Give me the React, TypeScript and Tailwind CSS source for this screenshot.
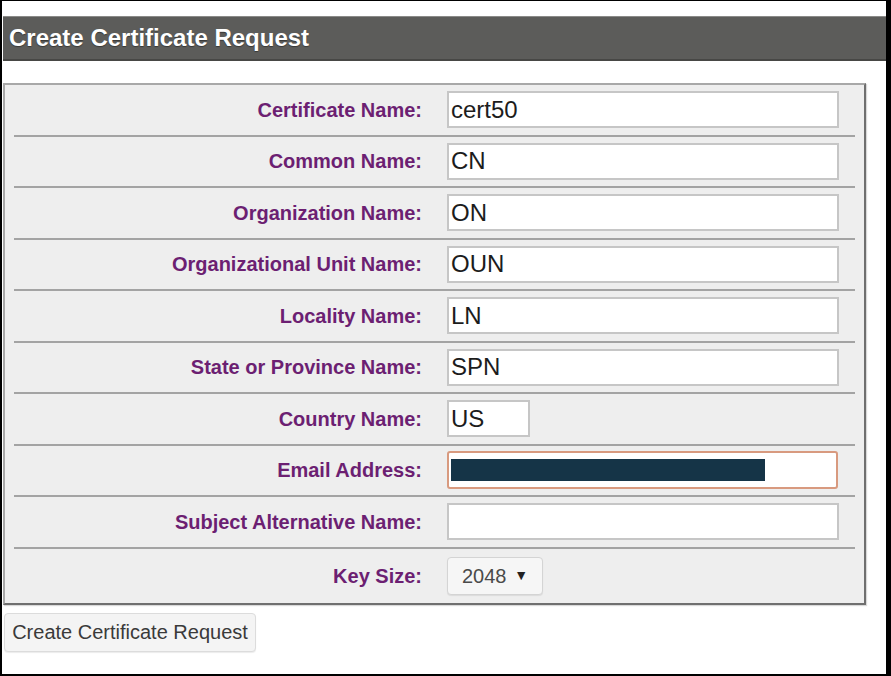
const ROWS: { label: string; value?: string; kind: "text" | "short" | "email" | "select" }[] = [
  { label: "Certificate Name:", value: "cert50", kind: "text" },
  { label: "Common Name:", value: "CN", kind: "text" },
  { label: "Organization Name:", value: "ON", kind: "text" },
  { label: "Organizational Unit Name:", value: "OUN", kind: "text" },
  { label: "Locality Name:", value: "LN", kind: "text" },
  { label: "State or Province Name:", value: "SPN", kind: "text" },
  { label: "Country Name:", value: "US", kind: "short" },
  { label: "Email Address:", kind: "email" },
  { label: "Subject Alternative Name:", value: "", kind: "text" },
  { label: "Key Size:", value: "2048", kind: "select" },
]

function Field({ row }: { row: (typeof ROWS)[number] }) {
  if (row.kind === "select") {
    return (
      <div className="flex h-[38px] w-[96px] items-center justify-between rounded-[4px] border border-[#d4d4d4] bg-[#f6f6f6] pl-[14px] pr-[14px] text-[20px] text-[#4a4a4a] shadow-[0_1px_1px_rgba(0,0,0,0.08)]">
        <span>{row.value}</span>
        <span className="text-[14px] text-[#222]">▼</span>
      </div>
    )
  }
  if (row.kind === "email") {
    return (
      <div className="flex h-[38px] w-[391px] items-center rounded-[3px] border-2 border-[#d89a7f] bg-white pl-[2px]">
        <div className="h-[22px] w-[314px] bg-[#153447]" />
      </div>
    )
  }
  return (
    <div
      className={
        "flex h-[37px] items-center border-2 border-[#c6c6c6] bg-white pl-[2px] text-[24px] text-[#1c1c1c] " +
        (row.kind === "short" ? "w-[83px]" : "w-[392px]")
      }
    >
      {row.value}
    </div>
  )
}

export default function App() {
  return (
    <div
      className="box-border h-[676px] w-[891px] border-t border-l-2 border-r-[5px] border-b-2 border-black bg-white"
      style={{ fontFamily: '"Liberation Sans", Arial, sans-serif' }}
    >
      {/* Title bar */}
      <div className="ml-px mt-[15px] flex h-[45px] items-center border-t border-b-2 border-t-[#8a8a88] border-b-[#474745] bg-[#5c5c5a] pl-[6px] text-[24px] font-bold text-white [text-shadow:0_1px_1px_rgba(0,0,0,0.4)]">
        Create Certificate Request
      </div>

      {/* Form panel */}
      <div className="ml-px mt-[22px] box-border w-[863px] border-2 border-t-[#a8a8a8] border-l-[#a8a8a8] border-r-[#6f6f6f] border-b-[#6f6f6f] bg-[#eeeeee] px-[9px] shadow-[1px_1px_1px_rgba(0,0,0,0.15)]">
        {ROWS.map((row, i) => (
          <div
            key={row.label}
            className={
              "flex items-center " +
              (i === ROWS.length - 1 ? "h-[54px]" : "h-[51.5px] border-b-2 border-[#a3a3a3]")
            }
          >
            <div className="w-[408px] text-right text-[20px] font-bold text-[#6c1f72]">{row.label}</div>
            <div className="ml-[25px]">
              <Field row={row} />
            </div>
          </div>
        ))}
      </div>

      {/* Submit */}
      <button className="ml-[2px] mt-[8px] h-[39px] w-[252px] rounded-[4px] border border-[#dcdcdc] bg-[#f4f4f4] text-[20px] text-[#3a3a3a] shadow-[0_1px_1px_rgba(0,0,0,0.08)]">
        Create Certificate Request
      </button>
    </div>
  )
}
